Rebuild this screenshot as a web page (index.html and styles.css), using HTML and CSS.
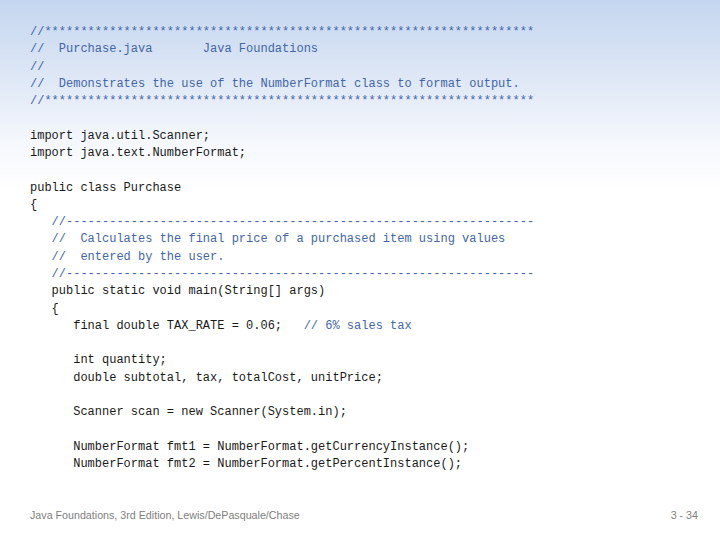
FILE: index.html
```html
<!DOCTYPE html>
<html>
<head>
<meta charset="utf-8">
<link rel="stylesheet" href="styles.css">
</head>
<body>
<div class="slide">
<pre class="code"><span class="c">//********************************************************************</span>
<span class="c">//  Purchase.java       Java Foundations</span>
<span class="c">//</span>
<span class="c">//  Demonstrates the use of the NumberFormat class to format output.</span>
<span class="c">//********************************************************************</span>

import java.util.Scanner;
import java.text.NumberFormat;

public class Purchase
{
   <span class="c">//-----------------------------------------------------------------</span>
   <span class="c">//  Calculates the final price of a purchased item using values</span>
   <span class="c">//  entered by the user.</span>
   <span class="c">//-----------------------------------------------------------------</span>
   public static void main(String[] args)
   {
      final double TAX_RATE = 0.06;   <span class="c">// 6% sales tax</span>

      int quantity;
      double subtotal, tax, totalCost, unitPrice;

      Scanner scan = new Scanner(System.in);

      NumberFormat fmt1 = NumberFormat.getCurrencyInstance();
      NumberFormat fmt2 = NumberFormat.getPercentInstance();</pre>
<div class="footer">
<span class="credit">Java Foundations, 3rd Edition, Lewis/DePasquale/Chase</span>
<span class="page">3 - 34</span>
</div>
</div>
</body>
</html>
```
FILE: styles.css
```css
html, body {
  margin: 0;
  padding: 0;
}
body {
  width: 720px;
  height: 540px;
  overflow: hidden;
  background: #fff;
}
.slide {
  width: 720px;
  height: 540px;
  box-sizing: border-box;
  background: linear-gradient(180deg, #c4d6ef 0px, #dfe8f6 80px, #f4f7fc 140px, #ffffff 190px, #ffffff 540px);
  display: flex;
  flex-direction: column;
  padding: 24px 22px 0 30px;
}
.code {
  margin: 0;
  font-family: "Liberation Mono", "Courier New", monospace;
  font-size: 12px;
  line-height: 17.28px;
  color: #1a1a1a;
  flex: 1;
}
.c {
  color: #4466a6;
}
.footer {
  display: flex;
  justify-content: space-between;
  align-items: center;
  height: 30px;
  margin-bottom: 10px;
  font-family: "Liberation Sans", Arial, sans-serif;
  font-size: 10.7px;
  color: #808080;
}
```
